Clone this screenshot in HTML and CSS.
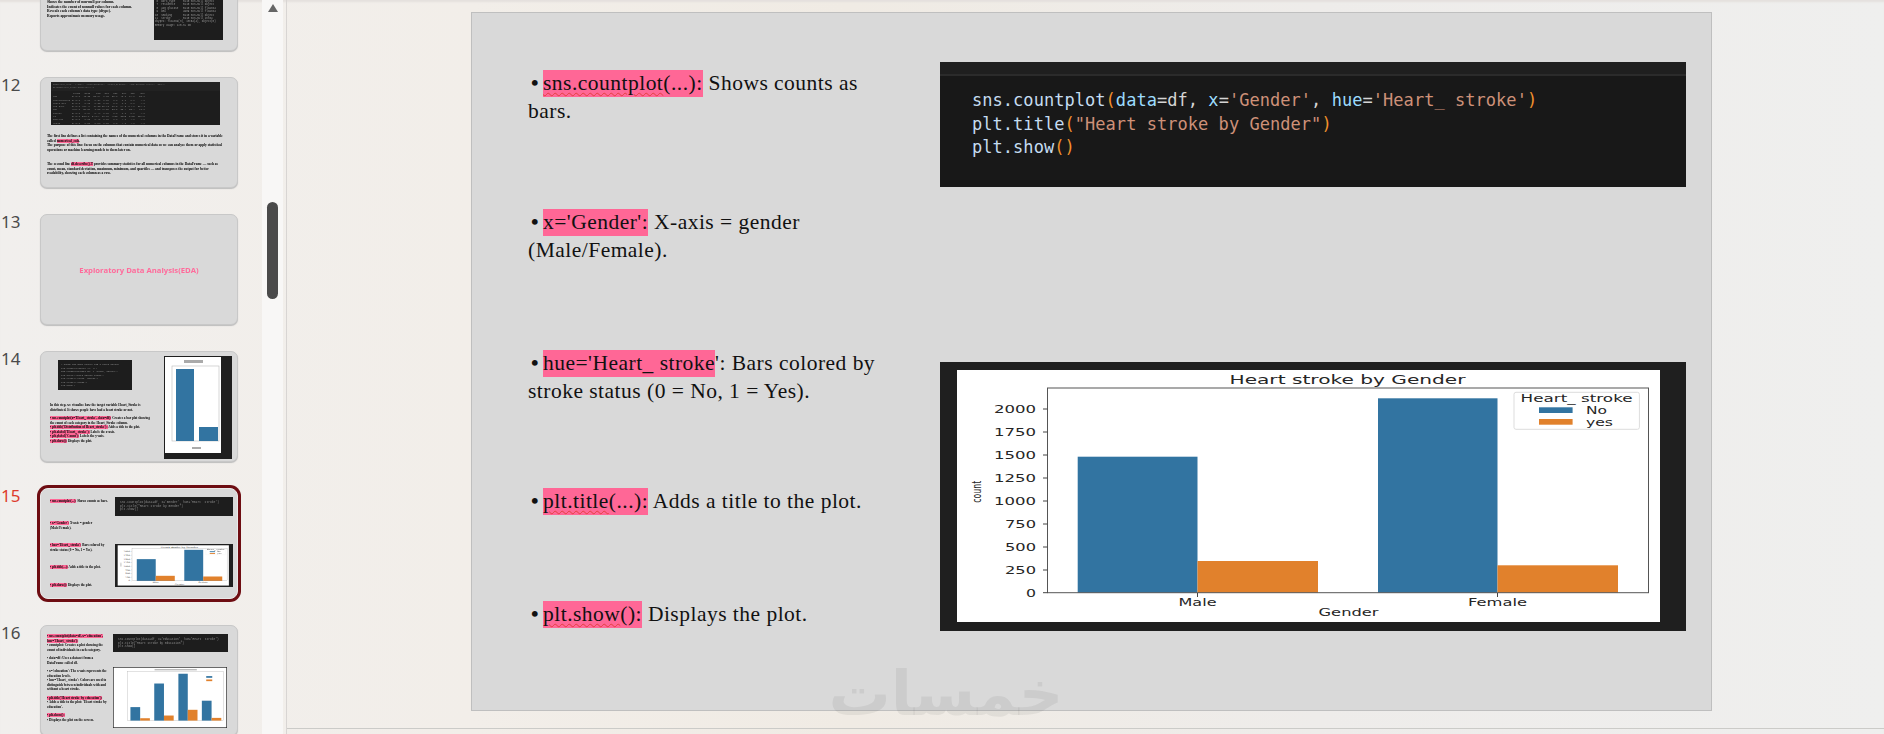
FILE: index.html
```html
<!DOCTYPE html>
<html lang="en">
<head>
<meta charset="utf-8">
<title>Slides</title>
<link rel="stylesheet" href="styles.css">
</head>
<body>
<svg class="defs" width="0" height="0" aria-hidden="true">
  <symbol id="chart" viewBox="0 0 746 269">
    <rect width="746" height="269" fill="#1f1f1f"/>
    <rect x="17" y="8" width="703" height="252" fill="#fff"/>
    <rect x="137.7" y="94.7" width="119.8" height="136" fill="#3274a1"/>
    <rect x="257.5" y="199" width="120.5" height="31.7" fill="#e1812c"/>
    <rect x="438" y="36.3" width="119.5" height="194.4" fill="#3274a1"/>
    <rect x="557.5" y="203.3" width="120.5" height="27.4" fill="#e1812c"/>
    <rect x="107.5" y="26" width="601" height="204.7" fill="none" stroke="#555" stroke-width="1"/>
    <path d="M103 47h4.500M103 70h4.500M103 93h4.500M103 116h4.500M103 139h4.500M103 162h4.500M103 185h4.500M103 208h4.500M103 230.700h4.500M257.500 231v4M557.500 231v4" stroke="#444" fill="none"/>
    <g class="plot-text">
      <text class="plot-title" x="407.500" y="22" text-anchor="middle" textLength="236" lengthAdjust="spacingAndGlyphs">Heart stroke by Gender</text>
      <text x="96" y="51" text-anchor="end" textLength="42" lengthAdjust="spacingAndGlyphs">2000</text>
      <text x="96" y="74" text-anchor="end" textLength="42" lengthAdjust="spacingAndGlyphs">1750</text>
      <text x="96" y="97" text-anchor="end" textLength="42" lengthAdjust="spacingAndGlyphs">1500</text>
      <text x="96" y="120" text-anchor="end" textLength="42" lengthAdjust="spacingAndGlyphs">1250</text>
      <text x="96" y="143" text-anchor="end" textLength="42" lengthAdjust="spacingAndGlyphs">1000</text>
      <text x="96" y="166" text-anchor="end" textLength="31" lengthAdjust="spacingAndGlyphs">750</text>
      <text x="96" y="189" text-anchor="end" textLength="31" lengthAdjust="spacingAndGlyphs">500</text>
      <text x="96" y="212" text-anchor="end" textLength="31" lengthAdjust="spacingAndGlyphs">250</text>
      <text x="96" y="234.500" text-anchor="end" textLength="10" lengthAdjust="spacingAndGlyphs">0</text>
      <text x="257.500" y="244" text-anchor="middle" textLength="38" lengthAdjust="spacingAndGlyphs">Male</text>
      <text x="557.500" y="244" text-anchor="middle" textLength="59" lengthAdjust="spacingAndGlyphs">Female</text>
      <text x="408.500" y="254" text-anchor="middle" textLength="60" lengthAdjust="spacingAndGlyphs">Gender</text>
      <text class="plot-count" transform="translate(41 129.700) rotate(-90)" text-anchor="middle" textLength="22" lengthAdjust="spacingAndGlyphs">count</text>
    </g>
    <rect x="574" y="30.300" width="125.400" height="37" rx="2" fill="#fff" stroke="#ddd"/>
    <rect x="599" y="45.300" width="33.600" height="5.700" fill="#3274a1"/>
    <rect x="599" y="57" width="33.600" height="5.700" fill="#e1812c"/>
    <g class="plot-text">
      <text x="636.600" y="40" text-anchor="middle" textLength="112" lengthAdjust="spacingAndGlyphs">Heart_ stroke</text>
      <text x="646" y="52" textLength="21" lengthAdjust="spacingAndGlyphs">No</text>
      <text x="646" y="64" textLength="27" lengthAdjust="spacingAndGlyphs">yes</text>
    </g>
  </symbol>
</svg>

<div class="app">
  <aside class="sidebar">
    <div class="thumb-list">
      <div class="thumb-row">
        <span class="num"></span>
        <div class="card card-11">
          <div class="tt t11">
            <p>Displays summary of each numeric column.</p>
            <p>Shows the number of non-null per column.</p>
            <p>Indicates the count of nonnull values for each column.</p>
            <p>Reveals each column's data type (dtype).</p>
            <p>Reports approximate memory usage.</p>
          </div>
          <pre class="mini-img info-img"> 1  gender        5110 non-null object
 2  age           5110 non-null float64
 3  hypertension  5110 non-null int64
 4  heart_disease 5110 non-null int64
 5  ever_married  5110 non-null object
 6  work_type     5110 non-null object
 7  residence     5110 non-null object
 8  avg_glucose   5110 non-null float64
 9  bmi           4909 non-null float64
10  smoking       5110 non-null object
11  stroke        5110 non-null int64
dtypes: float64(3), int64(4), object(5)
memory usage: 125.3+ KB</pre>
        </div>
      </div>

      <div class="thumb-row">
        <span class="num">12</span>
        <div class="card card-12">
          <div class="desc-img">
            <pre class="desc-head">numerical_cols = ['age', 'hypertension', 'heart_disease', 'avg_glucose_level', 'bmi']
df[numerical_cols].describe().T</pre>
            <pre class="desc-table">              count   mean    std   min   25%   50%   75%    max
age          5110.0  43.22  22.61  0.08  25.0  45.0  61.0   82.0
hypertension 5110.0   0.09   0.29  0.00   0.0   0.0   0.0    1.0
heart_dis    5110.0   0.05   0.22  0.00   0.0   0.0   0.0    1.0
avg_gluc     5110.0 106.14  45.28 55.12  77.2  91.8 114.0  271.7
bmi          4909.0  28.89   7.85 10.30  23.5  28.1  33.1   97.6
stroke       5110.0   0.04   0.19  0.00   0.0   0.0   0.0    1.0
id           5110.0 36517. 21161. 67.00  1768  3673  5468  72940
married      5110.0   0.65   0.47  0.00   0.0   1.0   1.0    1.0
urban        5110.0   0.50   0.50  0.00   0.0   1.0   1.0    1.0</pre>
          </div>
          <div class="tt t12">
            <p>The first line defines a list containing the names of the numerical columns in the DataFrame and stores it in a variable called <mark>numerical_cols</mark>.<br>The purpose of this line: focus on the columns that contain numerical data so we can analyze them or apply statistical operations or machine learning models to them later on.</p>
            <p>The second line <mark>df.describe().T</mark> provides summary statistics for all numerical columns in the DataFrame — such as count, mean, standard deviation, maximum, minimum, and quartiles — and transposes the output for better readability, showing each column as a row.</p>
          </div>
        </div>
      </div>

      <div class="thumb-row">
        <span class="num">13</span>
        <div class="card card-13"><span class="section-title">Exploratory Data Analysis(EDA)</span></div>
      </div>

      <div class="thumb-row">
        <span class="num">14</span>
        <div class="card card-14">
          <div class="col-14">
            <pre class="mini-img code-14"># Count how many people had a heart stroke
plt.figure(figsize=(6, 4))
sns.countplot(data=df, x='Heart_ stroke')
plt.title('Heart stroke count')
plt.xlabel('Heart_ stroke')
plt.ylabel('Count')
plt.show()</pre>
            <div class="tt t14">
              <p>In this step, we visualize how the target variable Heart_Stroke is distributed. It shows people have had a heart stroke or not.</p>
              <p><mark>• sns.countplot(x='Heart_ stroke', data=df):</mark> Creates a bar plot showing the count of each category in the Heart_Stroke column.<br><mark>• plt.title('Distribution of Heart_stroke'):</mark> Adds a title to the plot.<br><mark>• plt.xlabel('Heart_ stroke'):</mark> Labels the x-axis.<br><mark>• plt.ylabel('Count'):</mark> Labels the y-axis.<br><mark>• plt.show():</mark> Displays the plot.</p>
            </div>
          </div>
          <svg class="chart-14" viewBox="0 0 68 103" preserveAspectRatio="none" aria-hidden="true">
            <rect width="68" height="103" fill="#1f1f1f"/>
            <rect x="1" y="1" width="56" height="96" fill="#fff"/>
            <rect x="8" y="10" width="47" height="75" fill="none" stroke="#bbb" stroke-width=".6"/>
            <rect x="12" y="13" width="18" height="72" fill="#3274a1"/>
            <rect x="35" y="71" width="19" height="14" fill="#3274a1"/>
            <rect x="20" y="4" width="19" height="3" fill="#aaa"/>
            <rect x="28" y="91" width="9" height="2" fill="#aaa"/>
          </svg>
        </div>
      </div>

      <div class="thumb-row">
        <span class="num num-active">15</span>
        <div class="card card-15 card-active">
          <div class="tt t15">
            <p><mark>• sns.countplot(...):</mark> Shows counts as bars.</p>
            <p><mark>• x='Gender':</mark> X-axis = gender (Male/Female).</p>
            <p><mark>• hue='Heart_ stroke':</mark> Bars colored by stroke status (0 = No, 1 = Yes).</p>
            <p><mark>• plt.title(...):</mark> Adds a title to the plot.</p>
            <p><mark>• plt.show():</mark> Displays the plot.</p>
          </div>
          <div class="col-15">
            <pre class="mini-img code-15">sns.countplot(data=df, x='Gender', hue='Heart_ stroke')
plt.title("Heart stroke by Gender")
plt.show()</pre>
            <svg class="chart-15" viewBox="0 0 746 269" preserveAspectRatio="none" aria-hidden="true"><use href="#chart"/></svg>
          </div>
        </div>
      </div>

      <div class="thumb-row">
        <span class="num">16</span>
        <div class="card card-16">
          <div class="tt t16">
            <p><mark>• sns.countplot(data=df, x='education', hue='Heart_ stroke'):</mark><br>• countplot: Creates a plot showing the count of individuals in each category.</p>
            <p>• data=df: Uses a dataset from a DataFrame called df.</p>
            <p>• x='education': The x-axis represents the education levels.<br>• hue='Heart_ stroke': Colors are used to distinguish between individuals with and without a heart stroke.</p>
            <p><mark>• plt.title('Heart stroke by education'):</mark><br>• Adds a title to the plot: 'Heart stroke by education'.</p>
            <p><mark>• plt.show():</mark><br>• Displays the plot on the screen.</p>
          </div>
          <div class="col-16">
            <pre class="mini-img code-16">sns.countplot(data=df, x='education', hue='Heart_ stroke')
plt.title("Heart stroke by education")
plt.show()</pre>
            <svg class="chart-16" viewBox="346 591 340 181" preserveAspectRatio="none" aria-hidden="true">
              <rect x="346" y="591" width="340" height="181" fill="#fff" stroke="#222" stroke-width="4"/>
              <rect x="390" y="605" width="285" height="145" fill="none" stroke="#aaa"/>
              <rect x="398" y="710" width="29" height="40" fill="#3274a1"/>
              <rect x="427" y="743" width="29" height="7" fill="#e1812c"/>
              <rect x="469" y="640" width="29" height="110" fill="#3274a1"/>
              <rect x="498" y="735" width="29" height="15" fill="#e1812c"/>
              <rect x="541" y="611" width="28" height="139" fill="#3274a1"/>
              <rect x="569" y="718" width="29" height="32" fill="#e1812c"/>
              <rect x="611" y="691" width="29" height="59" fill="#3274a1"/>
              <rect x="640" y="742" width="29" height="8" fill="#e1812c"/>
              <rect x="470" y="597" width="126" height="4" fill="#bbb"/>
              <rect x="624" y="618" width="18" height="5" fill="#3274a1"/>
              <rect x="624" y="628" width="18" height="5" fill="#e1812c"/>
            </svg>
          </div>
        </div>
      </div>
    </div>
  </aside>

  <div class="scrollbar">
    <span class="scroll-up"></span>
    <span class="scroll-thumb"></span>
  </div>

  <main class="main">
    <div class="stage">
      <section class="slide">
        <div class="points">
          <p class="point"><span class="bullet">•</span><span class="hl"><span class="squiggle">sns.countplot</span>(...):</span> Shows counts as bars.</p>
          <p class="point"><span class="bullet">•</span><span class="hl">x='Gender':</span> X-axis = gender (Male/Female).</p>
          <p class="point"><span class="bullet">•</span><span class="hl">hue='Heart_ stroke</span>': Bars colored by stroke status (0 = No, 1 = Yes).</p>
          <p class="point"><span class="bullet">•</span><span class="hl"><span class="squiggle">plt.title</span>(...):</span> Adds a title to the plot.</p>
          <p class="point"><span class="bullet">•</span><span class="hl"><span class="squiggle">plt.show</span>():</span> Displays the plot.</p>
        </div>
        <div class="visuals">
          <div class="code-block">
            <div class="code-bar"></div>
            <pre class="code"><span class="fn">sns.countplot</span><span class="par">(</span><span class="arg">data</span>=df, <span class="arg">x</span>=<span class="str">'Gender'</span>, <span class="arg">hue</span>=<span class="str">'Heart_ stroke'</span><span class="par">)</span>
<span class="fn">plt.title</span><span class="par">(</span><span class="str">"Heart stroke by Gender"</span><span class="par">)</span>
<span class="fn">plt.show</span><span class="par">()</span></pre>
          </div>
          <svg class="chart" viewBox="0 0 746 269" aria-label="Heart stroke by Gender bar chart"><use href="#chart"/></svg>
        </div>
      </section>
    </div>
    <span class="watermark" dir="rtl" lang="ar">خمسات</span>
  </main>
</div>
</body>
</html>
```
FILE: styles.css
```css
* { box-sizing: border-box; }
html, body { margin: 0; height: 734px; overflow: hidden; }
body {
  background: linear-gradient(90deg, #f1efed 0%, #f2eee9 25%, #f0ebe4 45%, #eeecea 70%, #efefee 100%);
  font-family: "Liberation Sans", sans-serif;
}
.defs { position: absolute; }
p, pre { margin: 0; }
.app { display: flex; height: 734px; box-shadow: inset 0 3px 2px -1px #e4e0de; }

/* Sidebar */
.sidebar { width: 262px; height: 734px; overflow: hidden; flex: none; }
.thumb-list { display: flex; flex-direction: column; gap: 26px; margin-top: -60px; }
.thumb-row { display: flex; align-items: flex-start; }
.num {
  width: 40px; flex: none; padding-left: 1px; margin-top: -4px;
  font: 17px/24px "Noto Sans", sans-serif; color: #4a4a4a;
}
.num-active { color: #dd3b2c; }
.card {
  width: 198px; height: 111px; flex: none;
  background: #d9d9d9; border: 1px solid #c8c8c8; border-radius: 7px;
  box-shadow: 0 1px 1px #bdbdbd; overflow: hidden; display: flex;
}
.card-active {
  border: 1px solid #e9e9e9; border-radius: 8px;
  box-shadow: 0 0 0 3px #6e0d12; overflow: hidden;
}
.tt {
  font: 700 3.500px/4.500px "Liberation Serif", serif; color: #000; filter: blur(.2px);
}
.tt mark { background: #ff6796; color: #000; }
.mini-img {
  background: #1d1d1d; color: #9a9a9a; font: 2.600px/3.400px "Liberation Mono", monospace;
  overflow: hidden; filter: blur(.2px);
}

.card-11 { justify-content: space-between; padding: 0 14px 11px 6px; }
.t11 { width: 100px; margin-top: 55px; line-height: 4.400px; font-size: 3.700px; }
.info-img { width: 69px; height: 59px; margin-top: 40px; padding: 2px 1px; }

.card-12 { flex-direction: column; padding: 4px 13px 0 6px; }
.desc-img { width: 169px; height: 43px; margin-left: 4px; background: #1d1d1d; flex: none; filter: blur(.2px); overflow: hidden; }
.desc-head { height: 9px; padding: 2px; background: #222; color: #777; font: 2.200px/2.700px "Liberation Mono", monospace; overflow: hidden; }
.desc-table { padding: 1px 2px; color: #888; font: 2.400px/3.300px "Liberation Mono", monospace; }
.t12 { margin-top: 9px; font-size: 3.500px; }
.t12 p + p { margin-top: 10px; }

.card-13 { align-items: center; justify-content: center; }
.section-title { font: 700 7.700px/10px "Open Sans", sans-serif; color: #ff6b9b; filter: blur(.2px); }

.card-14 { padding: 4px 5px 0 9px; justify-content: space-between; }
.col-14 { width: 100px; display: flex; flex-direction: column; }
.code-14 { width: 74px; height: 30px; margin: 4px 0 0 8px; padding: 3px 3px; line-height: 3.500px; font-size: 2.300px; white-space: pre; }
.t14 { margin-top: 13px; font-size: 3.300px; line-height: 4.500px; }
.t14 p + p { margin-top: 4px; }
.chart-14 { width: 68px; height: 103px; flex: none; filter: blur(.2px); }

.card-15 { padding: 8px 4px 0 9px; justify-content: space-between; }
.t15 { width: 58px; padding-top: 2px; font-size: 3.300px; }
.t15 p { height: 9px; margin-bottom: 13px; }
.t15 p:nth-child(4), .t15 p:nth-child(5) { margin-bottom: 13.500px; height: 4.500px; }
.col-15 { width: 118px; display: flex; flex-direction: column; gap: 28px; }
.code-15 { height: 19px; padding: 4px 5px; color: #8f8f8f; font-size: 3px; line-height: 3.500px; }
.chart-15 { width: 118px; height: 43px; filter: blur(.2px); }

.card-16 { padding: 8px 9px 0 6px; justify-content: space-between; }
.t16 { width: 62px; font-size: 3.400px; }
.t16 p { margin-bottom: 4px; }
.col-16 { width: 115px; display: flex; flex-direction: column; gap: 15px; }
.code-16 { height: 18px; padding: 4px 5px; color: #8f8f8f; font-size: 2.900px; line-height: 3.500px; }
.chart-16 { width: 114px; height: 61px; flex: none; filter: blur(.2px); }

/* Scrollbar */
.scrollbar {
  position: relative; width: 21px; flex: none; background: #f8f7f6; margin-right: 3px;
  display: flex; flex-direction: column; align-items: center;
}
.scroll-up {
  width: 0; height: 0; margin-top: 4px;
  border-left: 5.500px solid transparent; border-right: 5.500px solid transparent; border-bottom: 8px solid #666;
}
.scroll-thumb { width: 11px; height: 97px; margin-top: 190px; background: #4a4a4a; border-radius: 5.500px; }

/* Main */
.main { position: relative; flex: 1; border-left: 1px solid #d8d5d3; min-width: 0; }
.stage { height: 729px; padding: 12px 0 0 184px; border-bottom: 1px solid #cbcbc8; }
.slide {
  width: 1241px; height: 699px; background: #d9d9d9; border: 1px solid #bfbfbf;
  display: flex; padding: 49px 0 0 56px;
}
.points {
  width: 412px; flex: none; padding-top: 7px;
  display: grid; grid-template-rows: 139px 141px 138px 113px 28px;
}
.point {
  width: 372px; font: 21.500px/28px "Liberation Serif", serif; color: #111; letter-spacing: .48px;
}
.bullet { display: inline-block; width: 15px; padding-left: 3px; font-weight: 700; }
.hl { background: #ff6796; display: inline-block; height: 27px; line-height: 27px; color: #111; }
.squiggle { text-decoration: underline wavy #e2403f 1px; text-underline-offset: 2px; }
.visuals { width: 746px; flex: none; display: flex; flex-direction: column; }
.code-block { height: 125px; background: #181818; }
.code-bar { height: 14px; background: #1f1f1f; border-bottom: 2px solid #2b2b2b; }
.code {
  padding: 13px 0 0 32px; font: 17px/23.500px "DejaVu Sans Mono", monospace; color: #d4d4d4; letter-spacing: .04px;
}
.fn { color: #c5dcf0; }
.arg { color: #9cdcfe; }
.par { color: #f0902c; }
.str { color: #ce9178; }
.chart { display: block; width: 746px; height: 269px; margin-top: 175px; }
.plot-text { font: 10px "DejaVu Sans", sans-serif; fill: #262626; }
.plot-title { font-size: 11.500px; }
.plot-count { font-size: 12px; }

.watermark {
  position: absolute; left: 539px; top: 652px; width: 240px; text-align: center;
  font: 700 62px/84px "DejaVu Sans", sans-serif; color: rgba(0, 0, 0, .06); pointer-events: none;
}
```
